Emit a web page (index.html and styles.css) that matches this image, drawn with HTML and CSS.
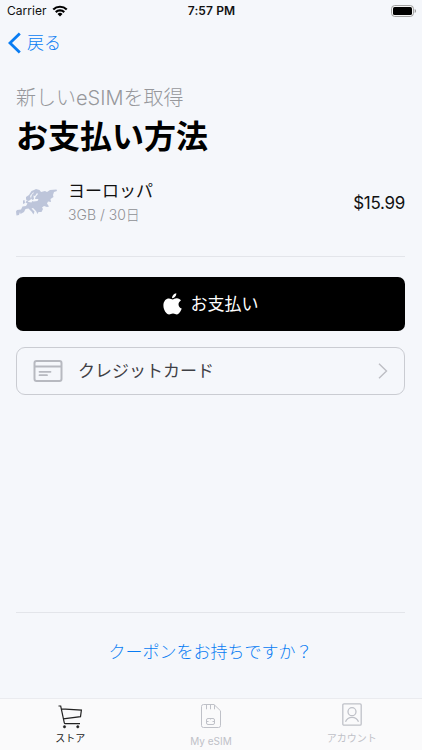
FILE: index.html
```html
<!DOCTYPE html>
<html lang="ja">
<head>
<meta charset="utf-8">
<title>お支払い方法</title>
<link rel="stylesheet" href="styles.css">
</head>
<body>
<div class="screen">
  <header class="status">
    <div class="carrier"><span>Carrier</span>
      <svg width="16" height="12" viewBox="0 0 16 12"><path d="M.5 3.7a10.7 10.7 0 0 1 15 0l-1.5 1.6a8.5 8.5 0 0 0-12 0zM3 6.3a7.1 7.1 0 0 1 10 0l-1.5 1.6a5 5 0 0 0-7 0zM5.500 8.900a3.600 3.600 0 0 1 5 0L8 11.400z"/></svg>
    </div>
    <div class="time">7:57 PM</div>
    <svg class="battery" width="26" height="12" viewBox="0 0 26 12"><rect x=".6" y=".6" width="21.800" height="10.800" rx="3" fill="#fff" stroke="#999"/><rect x="2" y="2" width="19" height="8" rx="1.600"/><path d="M23.700 4v4q1.400-.6 1.400-2t-1.400-2" fill="#999"/></svg>
  </header>
  <nav class="back">
    <svg width="14" height="22" viewBox="0 0 14 22"><path d="M11.800 1.500 2 11l9.800 9.500" fill="none" stroke="#087cf3" stroke-width="2.800"/></svg>
    <span>戻る</span>
  </nav>
  <main class="content">
    <p class="subtitle">新しいeSIMを取得</p>
    <h1 class="title">お支払い方法</h1>
    <section class="plan">
      <svg class="region" width="41" height="28" viewBox="0 0 41 28"><path d="M0 22.500 1 21l4-.5 1.500-3 3.500-.5 1.500-2.500-2-1 1.500-2.500 1.500 2 3 .5 1-2-1.500-1-2.500 1.500-2.500-1.500V8l3-2 2.500-4L18 1l2-1 3.500 1 1.500 2 4-1 2 1 3-2 6.500-.5.500 1.500-3 1-1 3 .5 2-3 2 .5 3-3-.5-1 2 2 3-2 .5-3-1-2 1.500 1 1.500-1.500 3h-3l-1 2-1.500-3-3-3-1.500.5 3 3-1 3-2-3-3-3-3 .5-1.500 3-3.500 2L4 23l-1 3-2.500.5z" fill="#bdc5da"/><path d="m17.500 3-3.500 4 1 2.500-.5 2 3 1 4-.5 1-2h-3.500l.5-2 2.500-3-1-1-2 3-1.500-.5z" fill="#f5f7fb"/><path d="m15.500 7 1-2 2-1-1 3 .5 3-1.500 1-1.500-1.500zM7 11.500l1.500-.5.500 3-2 1z" fill="#bdc5da"/></svg>
      <div class="info"><div class="name">ヨーロッパ</div><div class="detail">3GB / 30日</div></div>
      <div class="price">$15.99</div>
    </section>
    <button class="apple">
      <svg width="19" height="23" viewBox="0 0 19 23" fill="#fff"><path d="M13.300.3c.2 2.500-1.900 5-4.200 4.900C8.900 2.900 11 .5 13.300.3zM9.700 6.400c1 0 2.200-1.200 4.200-1.100 1.800.1 3.200.9 4 2.200-3.600 2.100-2.900 6.700.8 8.100-.8 2.300-2.700 5.900-4.800 5.900-1.500 0-2-.9-3.900-.9s-2.500.9-3.900.9C3.500 21.500.4 17 .4 12.500c0-4.500 2.700-7.100 5.500-7.100 1.700 0 2.900 1 3.800 1z"/></svg>
      <span>お支払い</span>
    </button>
    <button class="card">
      <svg width="30" height="22" viewBox="0 0 30 22" fill="none" stroke="#b7b9c0" stroke-width="2"><rect x="1.500" y="1" width="27" height="20" rx="2"/><path d="M1.500 6.500h27"/><path d="M6.500 11.800h11M6.500 15.200h7.500" stroke-width="1.800" stroke-linecap="round"/></svg>
      <span>クレジットカード</span>
      <svg width="10" height="16" viewBox="0 0 10 16" fill="none" stroke="#bdbec4" stroke-width="1.400"><path d="m1 .8 7.500 7.200L1 15.200"/></svg>
    </button>
    <a class="coupon">クーポンをお持ちですか？</a>
  </main>
  <footer class="tabs">
    <div class="tab active">
      <svg width="25" height="24" viewBox="0 0 25 24" fill="none" stroke="#222" stroke-width="1.200"><path d="M.5 1h2.200l3.600 16.800q.2.800 1.100.8H22M3.400 3.800l20 1.300-.9 6.600L5.200 13.900"/><circle cx="6.500" cy="21.800" r="1.200" fill="#222" stroke-width=".5"/><circle cx="19.800" cy="21.800" r="1.200" fill="#222" stroke-width=".5"/></svg>
      <span>ストア</span>
    </div>
    <div class="tab sim">
      <svg width="20" height="24" viewBox="0 0 20 24" fill="none" stroke="#bfc1c8"><path d="M2.500.5H13l6.500 6.300v14.700q0 2-2 2h-15q-2 0-2-2v-19q0-2 2-2zM5.500.5v4.800M9.500.5v4.800M13.500 1v4.300"/><rect x="5.500" y="14.500" width="8" height="6" rx="1.500"/><path d="M5.500 17.500h2m4 0h2M9.500 14.500v1"/></svg>
      <span>My eSIM</span>
    </div>
    <div class="tab account">
      <svg width="20" height="23" viewBox="0 0 20 23" fill="none" stroke="#bfc1c8" stroke-width="1.300"><rect x=".8" y=".8" width="18.400" height="21.400" rx="1.200"/><circle cx="10" cy="8.700" r="4"/><path d="M3.500 18.800q1.800-4.500 6.500-4.500t6.500 4.500"/></svg>
      <span>アカウント</span>
    </div>
  </footer>
</div>
</body>
</html>
```
FILE: styles.css
```css
* { box-sizing: border-box; }
body, p, h1 { margin: 0; }
body {
  font-family: Inter, "Noto Sans CJK JP", sans-serif;
  background: #f5f7fb;
  color: #111;
}
svg { display: block; flex: none; }
.screen { height: 750px; display: flex; flex-direction: column; overflow: hidden; }
.status {
  height: 22px;
  padding: 0 6px 0 7px;
  display: grid;
  grid-template-columns: 1fr auto 1fr;
  align-items: center;
  font-size: 12px;
  line-height: 22px;
}
.carrier { display: flex; align-items: center; gap: 5px; letter-spacing: .05px; }
.time { font-weight: 600; letter-spacing: .1px; }
.battery { justify-self: end; margin-right: -1px; }
.back {
  height: 42px;
  padding-left: 8px;
  display: flex;
  align-items: center;
  gap: 5px;
  color: #087cf3;
  font-size: 17px;
  font-weight: 300;
  line-height: 24px;
}
.content { flex: 1; padding: 20px 17px 0 16px; display: flex; flex-direction: column; }
.subtitle { font-size: 20px; line-height: 28px; font-weight: 300; color: #97989c; white-space: nowrap; }
.title { margin-top: 3px; font-size: 32px; line-height: 44px; font-weight: 700; color: #000; }
.plan {
  height: 98px;
  padding-bottom: 9px;
  display: flex;
  align-items: center;
  border-bottom: 1px solid #e3e5ea;
}
.info { margin-left: 11px; }
.name { font-size: 17px; line-height: 24px; font-weight: 400; }
.detail { font-size: 14px; line-height: 24px; font-weight: 300; color: #8f9095; }
.price { margin-left: auto; font-size: 17px; letter-spacing: -.3px; }
button { font: inherit; display: flex; align-items: center; margin: 0; flex: none; }
.apple {
  height: 54px;
  margin-top: 20px;
  justify-content: center;
  gap: 9px;
  background: #000;
  color: #fff;
  border: 0;
  border-radius: 7px;
  font-size: 17px;
  line-height: 24px;
}
.card {
  height: 48px;
  margin-top: 16px;
  padding: 0 16px;
  background: transparent;
  border: 1px solid #caccd2;
  border-radius: 9px;
  color: #3f4045;
  font-size: 17px;
  line-height: 24px;
}
.card span { margin-left: 15px; flex: 1; text-align: left; }
.coupon {
  height: 86px;
  margin-top: auto;
  border-top: 1px solid #e3e5ea;
  text-align: center;
  font-size: 17px;
  line-height: 79px;
  color: #087cf3;
  font-weight: 300;
}
.tabs {
  height: 52px;
  display: grid;
  grid-template-columns: repeat(3, 1fr);
  background: #fafafb;
  border-top: 1px solid #eaebef;
}
.tab { display: flex; flex-direction: column; align-items: center; font-size: 10px; line-height: 14px; color: #bfc1c8; }
.active { color: #222; padding-top: 6px; gap: 2px; }
.sim { padding-top: 5px; gap: 6px; }
.account { padding-top: 4px; gap: 5px; }
```
